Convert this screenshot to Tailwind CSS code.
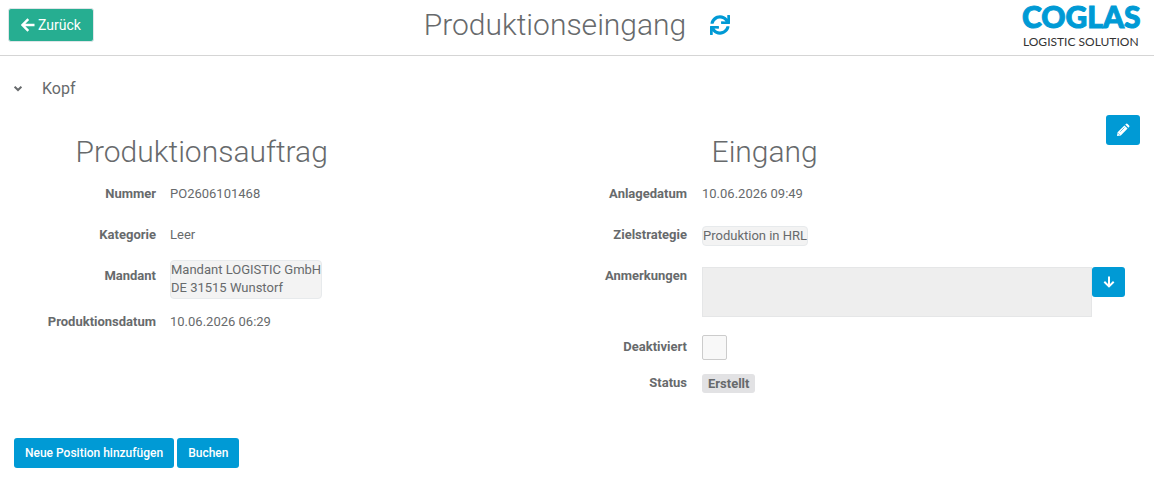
<!DOCTYPE html>
<html lang="de">
<head>
    <meta charset="UTF-8">
    <meta name="viewport" content="width=device-width, initial-scale=1.0">
    <title>Produktionseingang</title>
    <script src="https://cdn.jsdelivr.net/npm/@tailwindcss/browser@4"></script>
</head>
<body class="bg-white font-['Roboto',sans-serif] text-[13px] leading-[18px] text-[#676a6c]">
    <header class="grid grid-cols-[1fr_auto_1fr] items-start h-14 border-b border-[#d5d5d5] px-2">
        <div class="pt-2">
            <button type="button" class="flex items-center gap-[3px] h-[34px] px-3 rounded-[3px] border border-[#dfe5e8] bg-[#26ae91] text-sm text-white">
                <svg class="w-[14px] h-[14px]" viewBox="0 0 14 14" fill="none" stroke="currentColor" stroke-width="2.4"><path d="M7.3 1.2 1.5 7l5.800 5.800M2 7h11.500"/></svg>
                Zurück
            </button>
        </div>
        <div class="flex items-center gap-6 h-[50px]">
            <h1 class="text-[30px] leading-9 font-light">Produktionseingang</h1>
            <a href="#" aria-label="Aktualisieren" class="text-[#009ad5]">
                <svg class="w-5 h-5" viewBox="0 0 512 512" fill="currentColor"><path d="M440.700 12.600l4 82.800C399.400 41.600 331.800 8 256 8 134.800 8 33.900 94.900 12.300 209.800 10.900 217.200 16.600 224 24.100 224h57.300c5.600 0 10.400-3.800 11.700-9.200C111.600 141.100 178.500 88 256 88c59 0 111.200 30.800 140.900 77.400l-101.500-4.900c-6.800-.3-12.600 5.100-12.600 12v47.400c0 6.600 5.400 12 12 12H500c6.600 0 12-5.400 12-12V12c0-6.600-5.400-12-12-12h-47.400c-6.800 0-12.200 5.700-11.900 12.600zM256 424c-59 0-111.200-30.800-140.900-77.400l101.500 4.900c6.800.3 12.600-5.100 12.600-12v-47.400c0-6.600-5.400-12-12-12H12c-6.600 0-12 5.400-12 12V500c0 6.600 5.400 12 12 12h47.400c6.800 0 12.200-5.700 11.900-12.600l-4-82.800C112.600 470.400 180.200 504 256 504c121.200 0 222.100-86.900 243.700-201.800 1.400-7.400-4.300-14.200-11.800-14.200h-57.300c-5.600 0-10.400 3.800-11.700 9.200C400.400 370.900 333.500 424 256 424z"/></svg>
            </a>
        </div>
        <div class="flex justify-end">
            <svg class="w-[125px] h-[52px] font-['Lato',sans-serif]" viewBox="0 0 125 52" role="img" aria-label="COGLAS Logistic Solution">
                <text x="1" y="28" font-size="30" font-weight="900" fill="#009ad5" stroke="#009ad5" stroke-width="1">COGLAS</text>
                <text x="2" y="46" font-size="12" fill="#333">LOGISTIC SOLUTION</text>
            </svg>
        </div>
    </header>

    <main class="px-[14px] pt-[23px]">
        <details open>
            <summary class="flex items-center gap-5 h-5 text-base leading-5">
                <svg class="w-2 h-2" viewBox="0 0 8 8" fill="none" stroke="currentColor" stroke-width="2"><path d="M.6 1.600 4 5l3.400-3.400"/></svg>
                Kopf
            </summary>
            <div class="flex justify-end pt-4">
                <button type="button" aria-label="Bearbeiten" class="flex items-center justify-center w-[34px] h-[30px] rounded-[3px] bg-[#009ad5] text-white">
                    <svg class="w-[14px] h-[14px]" viewBox="0 0 14 14" fill="currentColor"><path d="m1 13 .6-3.800 6.800-6.800 3.200 3.200-6.800 6.800zM9.200 1.600l.7-.7a1.200 1.200 0 0 1 1.700 0l1.500 1.500a1.200 1.200 0 0 1 0 1.700l-.7.7z"/><path d="m2.200 10.300 1.500 1.500M4.300 8.700l4.200-4.200" fill="none" stroke="#009ad5" stroke-width=".6"/></svg>
                </button>
            </div>

            <div class="grid grid-cols-2 -mt-[11px]">
                <section>
                    <h2 class="w-2/3 mb-2 text-center text-[30px] leading-9 font-light">Produktionsauftrag</h2>
                    <dl class="flex flex-col gap-[7px]">
                        <div class="flex gap-[14px] min-h-[34px]">
                            <dt class="w-[142px] pt-[7px] text-right font-bold">Nummer</dt>
                            <dd class="pt-[7px]">PO2606101468</dd>
                        </div>
                        <div class="flex gap-[14px] min-h-[34px]">
                            <dt class="w-[142px] pt-[7px] text-right font-bold">Kategorie</dt>
                            <dd class="pt-[7px]">Leer</dd>
                        </div>
                        <div class="flex gap-[14px] min-h-[34px]">
                            <dt class="w-[142px] pt-[7px] text-right font-bold">Mandant</dt>
                            <dd class="pb-px border border-[#e7eaec] rounded-[4px] bg-[#f3f3f3]">Mandant LOGISTIC GmbH<br>DE 31515 Wunstorf</dd>
                        </div>
                        <div class="flex gap-[14px] min-h-[34px]">
                            <dt class="w-[142px] pt-[7px] text-right font-bold">Produktionsdatum</dt>
                            <dd class="pt-[7px]">10.06.2026 06:29</dd>
                        </div>
                    </dl>
                </section>

                <section>
                    <h2 class="w-2/3 mb-2 text-center text-[30px] leading-9 font-light">Eingang</h2>
                    <div class="flex flex-col gap-[7px] pr-[15px]">
                        <div class="flex gap-[15px] min-h-[34px] pt-[7px]">
                            <span class="w-[110px] text-right font-bold">Anlagedatum</span>
                            <span>10.06.2026 09:49</span>
                        </div>
                        <div class="flex items-start gap-[15px] min-h-[34px] pt-[7px]">
                            <span class="w-[110px] text-right font-bold">Zielstrategie</span>
                            <span class="border border-[#e7eaec] rounded-[4px] bg-[#f3f3f3]">Produktion in HRL</span>
                        </div>
                        <div class="flex items-start gap-[15px] py-[7px]">
                            <label for="anmerkungen" class="w-[110px] text-right font-bold">Anmerkungen</label>
                            <div class="flex flex-1 items-start">
                                <textarea id="anmerkungen" readonly class="flex-1 h-[50px] resize-none border border-[#e5e6e7] bg-[#eee] px-3 py-1"></textarea>
                                <button type="button" aria-label="Anmerkungen aufklappen" class="flex items-center justify-center w-[33px] h-[30px] rounded-[3px] bg-[#009ad5] text-white">
                                    <svg class="w-3 h-3" viewBox="0 0 12 12" fill="none" stroke="currentColor" stroke-width="2"><path d="M6 .5v9.700M1.300 5.700 6 10.400l4.700-4.700"/></svg>
                                </button>
                            </div>
                        </div>
                        <div class="flex gap-[15px] h-[29px]">
                            <label for="deaktiviert" class="w-[110px] pt-[7px] text-right font-bold">Deaktiviert</label>
                            <input type="checkbox" id="deaktiviert" class="appearance-none self-end w-[25px] h-[25px] border border-[#ccc] rounded-[2px] bg-[#f8f8f8]">
                        </div>
                        <div class="flex items-start gap-[15px] min-h-[34px] pt-[7px]">
                            <span class="w-[110px] text-right font-bold">Status</span>
                            <span class="px-[6px] rounded-[3px] bg-[#e2e2e4] leading-[19px] font-bold">Erstellt</span>
                        </div>
                    </div>
                </section>
            </div>
        </details>

        <div class="flex gap-[3px] pt-[37px] pb-3">
            <button type="button" class="h-[30px] px-[11px] rounded-[3px] bg-[#009ad5] text-xs font-medium text-white">Neue Position hinzufügen</button>
            <button type="button" class="h-[30px] px-[11px] rounded-[3px] bg-[#009ad5] text-xs font-medium text-white">Buchen</button>
        </div>
    </main>
</body>
</html>
